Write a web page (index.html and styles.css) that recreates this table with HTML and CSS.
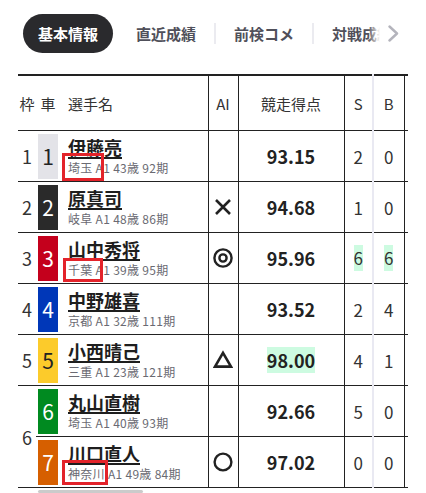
FILE: index.html
```html
<!DOCTYPE html>
<html lang="ja">
<head>
<meta charset="utf-8">
<link rel="stylesheet" href="styles.css">
</head>
<body>
<div class="tabs">
  <div class="tab active">基本情報</div>
  <div class="tab first">直近成績</div>
  <div class="sep"></div>
  <div class="tab">前検コメ</div>
  <div class="sep"></div>
  <div class="tab">対戦成績</div>
  <div class="fade">
    <svg class="chev" width="11" height="17" viewBox="0 0 11 17"><path d="M1.5 1.5 L9 8.5 L1.5 15.5" fill="none" stroke="#b4b4bc" stroke-width="2.4" stroke-linecap="round" stroke-linejoin="round"/></svg>
  </div>
</div>

<div class="wrap">
<table class="race">
  <colgroup>
    <col class="c-waku"><col class="c-sha"><col class="c-name"><col class="c-ai"><col class="c-score"><col class="c-s"><col class="c-b"><col class="c-x">
  </colgroup>
  <thead>
    <tr>
      <th class="waku">枠</th><th class="sha">車</th><th class="name">選手名</th><th class="ai">AI</th><th class="score">競走得点</th><th class="s">S</th><th class="b">B</th><th class="x"></th>
    </tr>
  </thead>
  <tbody>
    <tr>
      <td class="waku">1</td>
      <td class="sha"><span class="car car1">1</span></td>
      <td class="name"><a class="pname">伊藤亮</a><div class="sub"><span class="mark m1">埼玉</span> A1 43歳 92期</div></td>
      <td class="ai"></td>
      <td class="score">93.15</td>
      <td class="s">2</td><td class="b">0</td><td class="x"></td>
    </tr>
    <tr>
      <td class="waku">2</td>
      <td class="sha"><span class="car car2">2</span></td>
      <td class="name"><a class="pname">原真司</a><div class="sub">岐阜 A1 48歳 86期</div></td>
      <td class="ai"><svg class="icon" width="20" height="20" viewBox="0 0 20 20"><path d="M3 3 L17 17 M17 3 L3 17" stroke="#222" stroke-width="2.6" fill="none"/></svg></td>
      <td class="score">94.68</td>
      <td class="s">1</td><td class="b">0</td><td class="x"></td>
    </tr>
    <tr>
      <td class="waku">3</td>
      <td class="sha"><span class="car car3">3</span></td>
      <td class="name"><a class="pname">山中秀将</a><div class="sub"><span class="mark m2">千葉</span> A1 39歳 95期</div></td>
      <td class="ai"><svg class="icon" width="20" height="20" viewBox="0 0 20 20"><circle cx="10" cy="10" r="8.6" stroke="#222" stroke-width="2.4" fill="none"/><circle cx="10" cy="10" r="3.6" stroke="#222" stroke-width="2.4" fill="none"/></svg></td>
      <td class="score">95.96</td>
      <td class="s"><span class="hl">6</span></td><td class="b"><span class="hl">6</span></td><td class="x"></td>
    </tr>
    <tr>
      <td class="waku">4</td>
      <td class="sha"><span class="car car4">4</span></td>
      <td class="name"><a class="pname">中野雄喜</a><div class="sub">京都 A1 32歳 111期</div></td>
      <td class="ai"></td>
      <td class="score">93.52</td>
      <td class="s">2</td><td class="b">4</td><td class="x"></td>
    </tr>
    <tr>
      <td class="waku">5</td>
      <td class="sha"><span class="car car5">5</span></td>
      <td class="name"><a class="pname">小西晴己</a><div class="sub">三重 A1 23歳 121期</div></td>
      <td class="ai"><svg class="icon" width="20" height="20" viewBox="0 0 20 20"><path d="M10 2.8 L18 16.6 L2 16.6 Z" stroke="#222" stroke-width="2.6" stroke-linejoin="miter" fill="none"/></svg></td>
      <td class="score"><span class="hl">98.00</span></td>
      <td class="s">4</td><td class="b">1</td><td class="x"></td>
    </tr>
    <tr>
      <td class="waku" rowspan="2">6</td>
      <td class="sha"><span class="car car6">6</span></td>
      <td class="name"><a class="pname">丸山直樹</a><div class="sub">埼玉 A1 40歳 93期</div></td>
      <td class="ai"></td>
      <td class="score">92.66</td>
      <td class="s">5</td><td class="b">0</td><td class="x"></td>
    </tr>
    <tr>
      <td class="sha"><span class="car car7">7</span></td>
      <td class="name"><a class="pname">川口直人</a><div class="sub"><span class="mark m3">神奈川</span> A1 49歳 84期</div></td>
      <td class="ai"><svg class="icon" width="20" height="20" viewBox="0 0 20 20"><circle cx="10" cy="10" r="8.4" stroke="#222" stroke-width="2.4" fill="none"/></svg></td>
      <td class="score">97.02</td>
      <td class="s">0</td><td class="b">0</td><td class="x"></td>
    </tr>
  </tbody>
</table>
<div class="scroll"><div class="thumb"></div></div>
</div>
</body>
</html>
```

FILE: styles.css
```css
html, body {
  margin: 0;
  padding: 0;
  background: #fff;
}
body {
  font-family: "Noto Sans CJK JP", "Noto Sans", sans-serif;
  color: #222;
  width: 426px;
  overflow: hidden;
}

/* tabs */
.tabs {
  position: relative;
  display: flex;
  align-items: center;
  padding: 14px 0 0 23px;
  height: 39px;
  overflow: hidden;
  white-space: nowrap;
}
.tab {
  flex: none;
  font-size: 15px;
  font-weight: 700;
  color: #50505a;
  padding: 0 18px;
  line-height: 39px;
}
.tab.first {
  padding-left: 23px;
}
.tab.active {
  background: #2a2a2d;
  color: #fff;
  border-radius: 20px;
  padding: 0 15px;
  height: 39px;
}
.sep {
  flex: none;
  width: 2px;
  height: 21px;
  background: #ebebf0;
}
.fade {
  position: absolute;
  top: 14px;
  right: 0;
  width: 58px;
  height: 39px;
  background: linear-gradient(to right, rgba(255,255,255,0) 0px, #fff 12px);
}
.chev {
  position: absolute;
  left: 20px;
  top: 11px;
}

/* table */
.wrap {
  margin: 21px 0 0 18px;
  width: 390px;
  overflow: hidden;
}
.race {
  width: 424px;
  table-layout: fixed;
  border-collapse: collapse;
  border-top: 2px solid #222;
}
.c-waku { width: 18px; }
.c-sha { width: 24px; }
.c-name { width: 148px; }
.c-ai { width: 30px; }
.c-score { width: 106px; }
.c-s { width: 29px; }
.c-b { width: 31px; }
.c-x { width: 38px; }

.race th {
  height: 54px;
  font-size: 15px;
  font-weight: 400;
  color: #333;
  padding: 0;
  border-bottom: 1px solid #222;
  text-align: center;
}
.race th.name {
  text-align: left;
  padding-left: 8px;
}
.race td {
  height: 50px;
  padding: 0;
  border-bottom: 1px solid #222;
  text-align: center;
  vertical-align: middle;
}
.race .ai {
  border-left: 1px solid #222;
  border-right: 1px solid #222;
}
.race .score {
  border-right: 1px solid #222;
}
.race .s {
  border-right: 2px solid #e9e9f2;
}
.race .b {
  border-right: 1px solid #222;
}
td.waku {
  font-size: 18px;
  color: #333;
}
.car {
  display: inline-flex;
  align-items: center;
  justify-content: center;
  width: 20px;
  height: 45px;
  font-size: 21px;
  color: #fff;
  vertical-align: middle;
}
.car1 { background: #e3e3e8; color: #222; }
.car2 { background: #2a2a2a; }
.car3 { background: #c4001c; }
.car4 { background: #0037b8; }
.car5 { background: #fccb2b; color: #222; }
.car6 { background: #008a20; }
.car7 { background: #d65f00; }

td.name {
  text-align: left;
  padding-left: 8px;
}
.pname {
  display: inline-block;
  font-size: 18px;
  font-weight: 700;
  color: #1e1e1e;
  text-decoration: underline;
  text-decoration-thickness: 1.5px;
  text-underline-offset: 2px;
  line-height: 22px;
}
.sub {
  font-size: 12px;
  letter-spacing: 0.3px;
  color: #6a6a72;
  line-height: 16px;
  white-space: nowrap;
}
.mark {
  position: relative;
}
.mark::after {
  content: "";
  position: absolute;
  border: 3px solid #e3232a;
}
.m1::after { left: -6px; right: -11px; top: -6px; bottom: -5px; }
.m2::after { left: -5px; right: -10px; top: -3px; bottom: -4px; }
.m3::after { left: -6px; right: -3px; top: -5px; bottom: -3px; }

.icon {
  display: block;
  margin: 0 auto;
}
td.score {
  font-size: 18px;
  font-weight: 700;
  color: #222;
}
td.s, td.b {
  font-size: 17px;
  color: #333;
}
.hl {
  display: inline-block;
  background: #cdfbe1;
  line-height: 26px;
}

.scroll {
  height: 5px;
  position: relative;
}
.thumb {
  position: absolute;
  left: 20px;
  top: 2px;
  width: 105px;
  height: 3px;
  border-radius: 2px;
  background: #cbcbcb;
}
```
